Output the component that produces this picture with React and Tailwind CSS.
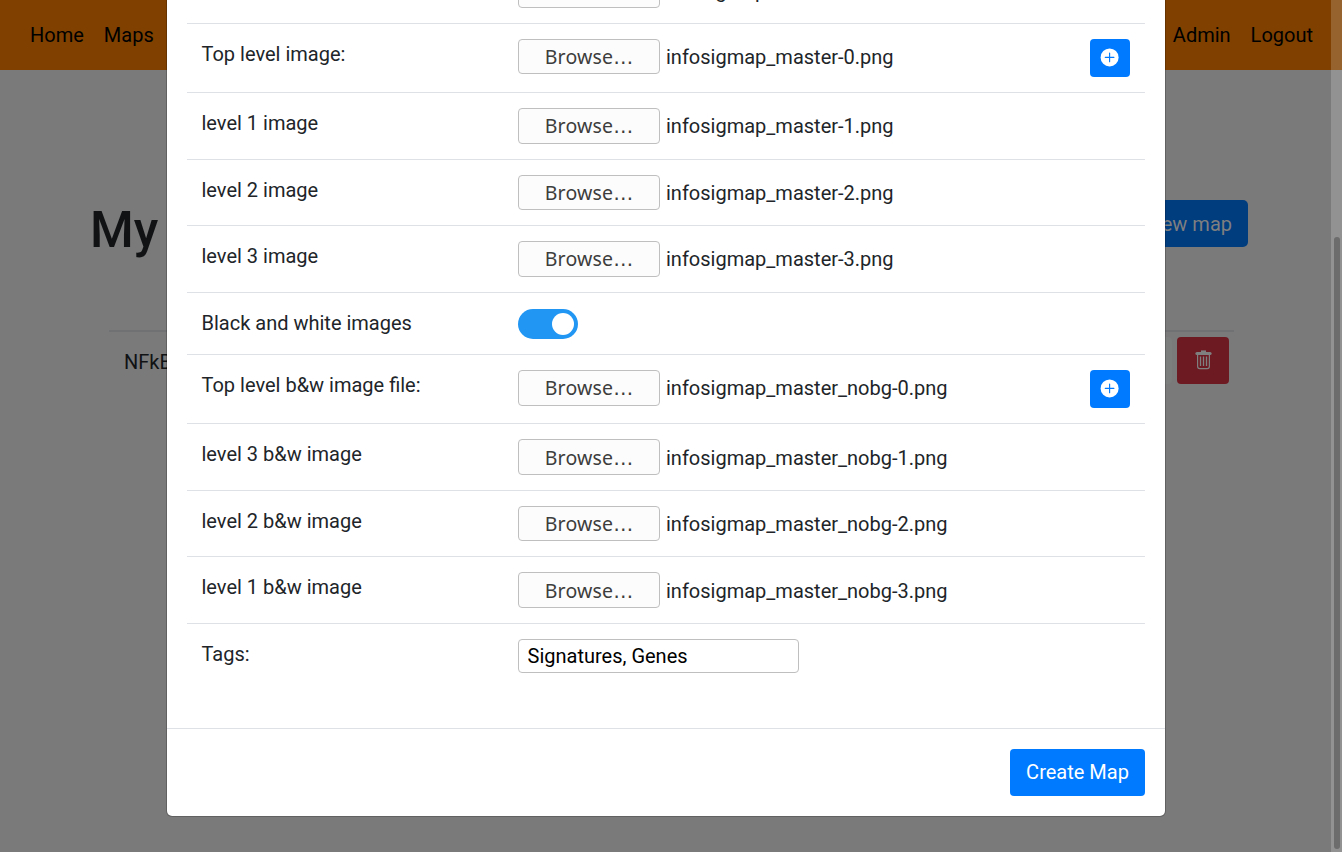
import React from "react";

const ROWS = [
  { label: "Top level image:", file: "infosigmap_master-0.png", add: true, h: "h-[69px]", btn: "h-[35px] pt-px" },
  { label: "level 1 image", file: "infosigmap_master-1.png", h: "h-[67px]", btn: "h-[36px]" },
  { label: "level 2 image", file: "infosigmap_master-2.png", h: "h-[66px]", btn: "h-[35px] pt-px" },
  { label: "level 3 image", file: "infosigmap_master-3.png", h: "h-[67px]", btn: "h-[36px]" },
  { label: "Black and white images", toggle: true, h: "h-[62px]" },
  { label: "Top level b&w image file:", file: "infosigmap_master_nobg-0.png", add: true, h: "h-[69px]", btn: "h-[36px]" },
  { label: "level 3 b&w image", file: "infosigmap_master_nobg-1.png", h: "h-[67px]", btn: "h-[36px] pt-[2px]", text: "mt-[4px]" },
  { label: "level 2 b&w image", file: "infosigmap_master_nobg-2.png", h: "h-[66px]", btn: "h-[35px] pt-px" },
  { label: "level 1 b&w image", file: "infosigmap_master_nobg-3.png", h: "h-[67px]", btn: "h-[36px] pt-[2px]", text: "mt-[4px]" },
  { label: "Tags:", tags: "Signatures, Genes", h: "h-[105px]" },
];

function FileInput({ file, button, text = "mt-[3px]" }) {
  return (
    <div className="flex items-start">
      <button className={`${button} flex w-[142px] items-center justify-center rounded-[4px] border border-[#bfbfbf] bg-[#fcfcfc] font-['Noto_Sans',sans-serif] text-[#3d3d3d]`}>
        <span className="h-[30px] whitespace-nowrap text-[19.5px] leading-[30px] tracking-[0.2px]">
          Browse<span className="font-['DejaVu_Sans',sans-serif] text-[20px] leading-none tracking-normal">…</span>
        </span>
      </button>
      <span className={`${text} ml-[6px] whitespace-nowrap leading-[30px]`}>{file}</span>
    </div>
  );
}

function AddButton() {
  return (
    <button className="mr-[15px] flex h-[38px] w-[40px] items-center justify-center rounded-[4px] bg-[#007bff]">
      <svg width="20" height="20" viewBox="0 0 20 20" className="-mt-px">
        <circle cx="9.6" cy="9.4" r="9" fill="#fff" />
        <path d="M9.6 5.1v8.6M5.3 9.4h8.6" stroke="#007bff" strokeWidth="1.15" strokeLinecap="round" />
      </svg>
    </button>
  );
}

function TrashIcon() {
  return (
    <svg width="17" height="20" viewBox="0 0 17 20" fill="none" stroke="#7f7f7f" className="-mt-[2px]">
      <path d="M1.9 3.4h13.2" strokeWidth="3" strokeLinecap="round" />
      <path d="M6 1.2h5" strokeWidth="1.6" />
      <path d="M2.6 4.5v11.8c0 1.4.8 2.3 2.1 2.3h7.6c1.3 0 2.1-.9 2.1-2.3V4.5" strokeWidth="1.2" />
      <path d="M5.5 6.5v9.5M8.5 6.5v9.5M11.5 6.5v9.5" strokeWidth="1.3" />
    </svg>
  );
}

function Row({ row }) {
  return (
    <div className={`${row.h} flex border-t border-[#dee2e6] pt-[15px]`}>
      <div className="w-[331px] shrink-0 pl-[14.5px] leading-[30px]">{row.label}</div>
      <div className="flex grow items-start justify-between">
        {row.file && <FileInput file={row.file} button={row.btn} text={row.text} />}
        {row.toggle && (
          <div className="mt-px flex h-[30px] w-[60px] items-center justify-end rounded-full bg-[#2196f3] pr-1">
            <div className="size-[22px] rounded-full bg-white" />
          </div>
        )}
        {row.tags && (
          <input
            className="h-[34px] w-[281px] rounded-[4px] border border-[#bfbfbf] bg-white px-[8.5px] text-[20px] text-black"
            defaultValue={row.tags}
          />
        )}
        {row.add && <AddButton />}
      </div>
    </div>
  );
}

function Page() {
  return (
    <div>
      <nav className="flex h-[70px] items-center justify-between bg-[#7f4000] pl-[30px] pr-[29px] text-black">
        <div className="flex gap-5">
          <span>Home</span>
          <span>Maps</span>
        </div>
        <div className="flex gap-5">
          <span>Admin</span>
          <span>Logout</span>
        </div>
      </nav>
      <div className="flex items-start justify-between pl-[90px] pr-[94px] pt-[130px] text-[#101214]">
        <h1 className="text-[50px] font-medium leading-[60px]">My maps</h1>
        <button className="h-[47px] rounded-[5px] bg-[#003d7f] px-4 text-[#7f7f7f]">New map</button>
      </div>
      <div className="ml-[109px] mr-[108px] mt-[70px] flex h-[59px] items-start justify-between border-t-2 border-[#6f7173] pl-[15px] pr-[5px] pt-[5px] text-[#101214]">
        <span className="pt-[10px] leading-[30px]">NFkB</span>
        <div className="flex items-center gap-[5px]">
          <div className="h-[47px] w-[52px] rounded-[4px] bg-[#7c7d7d]" />
          <button className="flex h-[47px] w-[52px] items-center justify-center rounded-[4px] bg-[#6e1a22]">
            <TrashIcon />
          </button>
        </div>
      </div>
    </div>
  );
}

function Scrollbar() {
  return (
    <div className="absolute right-0 top-0 h-full w-[11px] bg-white/[0.18] pl-[3px] pt-[237px]">
      <div className="h-[612px] w-[6px] rounded-full bg-[#6c6c6c]" />
    </div>
  );
}

function Modal() {
  return (
    <div className="absolute left-[166px] top-0 h-[817px] w-[1000px] overflow-hidden rounded-b-[6px] border-x border-b border-black/20 bg-white bg-clip-padding text-[#212529]">
      <div className="px-5">
        <div className="flex h-[23px] items-end pb-[15px] pl-[331px]">
          <FileInput file="infosigmap.txt" button="h-[36px]" text="mt-[4px]" />
        </div>
        {ROWS.map((row) => (
          <Row key={row.label} row={row} />
        ))}
      </div>
      <div className="flex justify-end border-t border-[#dee2e6] px-5 pt-5">
        <button className="h-[47px] w-[135px] rounded-[4px] bg-[#007bff] pb-[2px] text-white">Create Map</button>
      </div>
    </div>
  );
}

export default function App() {
  return (
    <div className="relative h-[852px] w-[1342px] overflow-hidden bg-[#7a7a7a] font-[Roboto,sans-serif] text-[20px]">
      <Page />
      <Modal />
      <Scrollbar />
    </div>
  );
}
